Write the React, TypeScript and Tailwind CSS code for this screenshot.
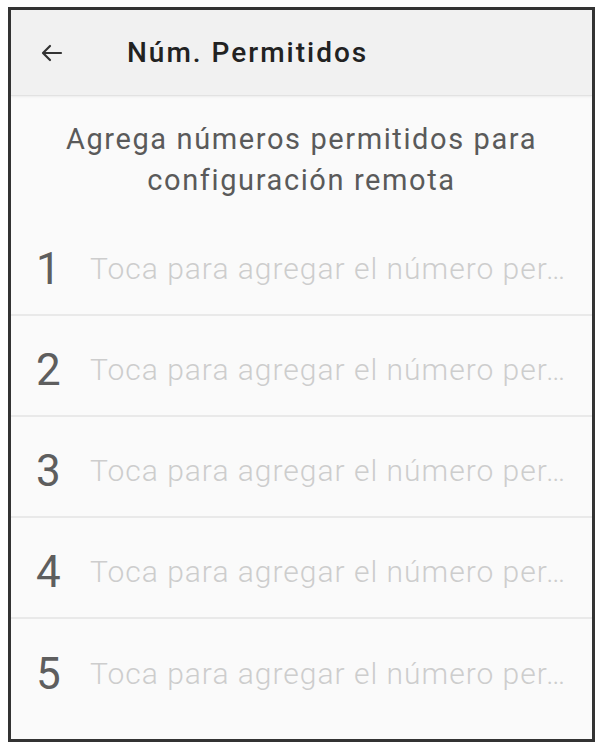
import React from "react";

export default function App() {
  const rows = [1, 2, 3, 4, 5];
  return (
    <div
      className="w-[600px] h-[746px] bg-white pt-[7px] pl-[8px]"
      style={{ fontFamily: "Roboto, 'Noto Sans', Arial, sans-serif" }}
    >
      <div className="w-[587px] h-[735px] border-[3px] border-[#333333] bg-[#fafafa] flex flex-col overflow-hidden">
        <div className="h-[86px] shrink-0 bg-[#f1f1f1] border-b border-[#e2e2e2] shadow-[0_1px_2px_rgba(0,0,0,0.06)] flex items-center">
          <div className="w-[116px] pl-[30px] flex items-center">
            <svg width="22" height="18" viewBox="0 0 22 18" fill="none" stroke="#333" strokeWidth="2.2" strokeLinecap="round" strokeLinejoin="round">
              <path d="M20 9H3" />
              <path d="M9 2L2 9l7 7" />
            </svg>
          </div>
          <span className="text-[28px] font-medium text-[#222] tracking-[2px]">Núm. Permitidos</span>
        </div>
        <div className="h-[119px] shrink-0 flex flex-col items-center pt-[23px] text-[29px] leading-[41px] tracking-[1.6px] text-[#5a5a5a] text-center">
          <div>Agrega números permitidos para</div>
          <div>configuración remota</div>
        </div>
        {rows.map((n, i) => (
          <div
            key={n}
            className={`h-[101px] shrink-0 flex items-center pt-[8px] pl-[25px] pr-[10px] ${i < rows.length - 1 ? "border-b-2 border-[#e9e9e9]" : ""}`}
          >
            <span className="w-[54px] shrink-0 text-[44px] font-normal text-[#5e5e5e] leading-none">{n}</span>
            <span className="min-w-0 flex-1 whitespace-nowrap text-[30px] font-light tracking-[1px] text-[#cdcdcd] leading-none">
              Toca para agregar el número per…
            </span>
          </div>
        ))}
      </div>
    </div>
  );
}
